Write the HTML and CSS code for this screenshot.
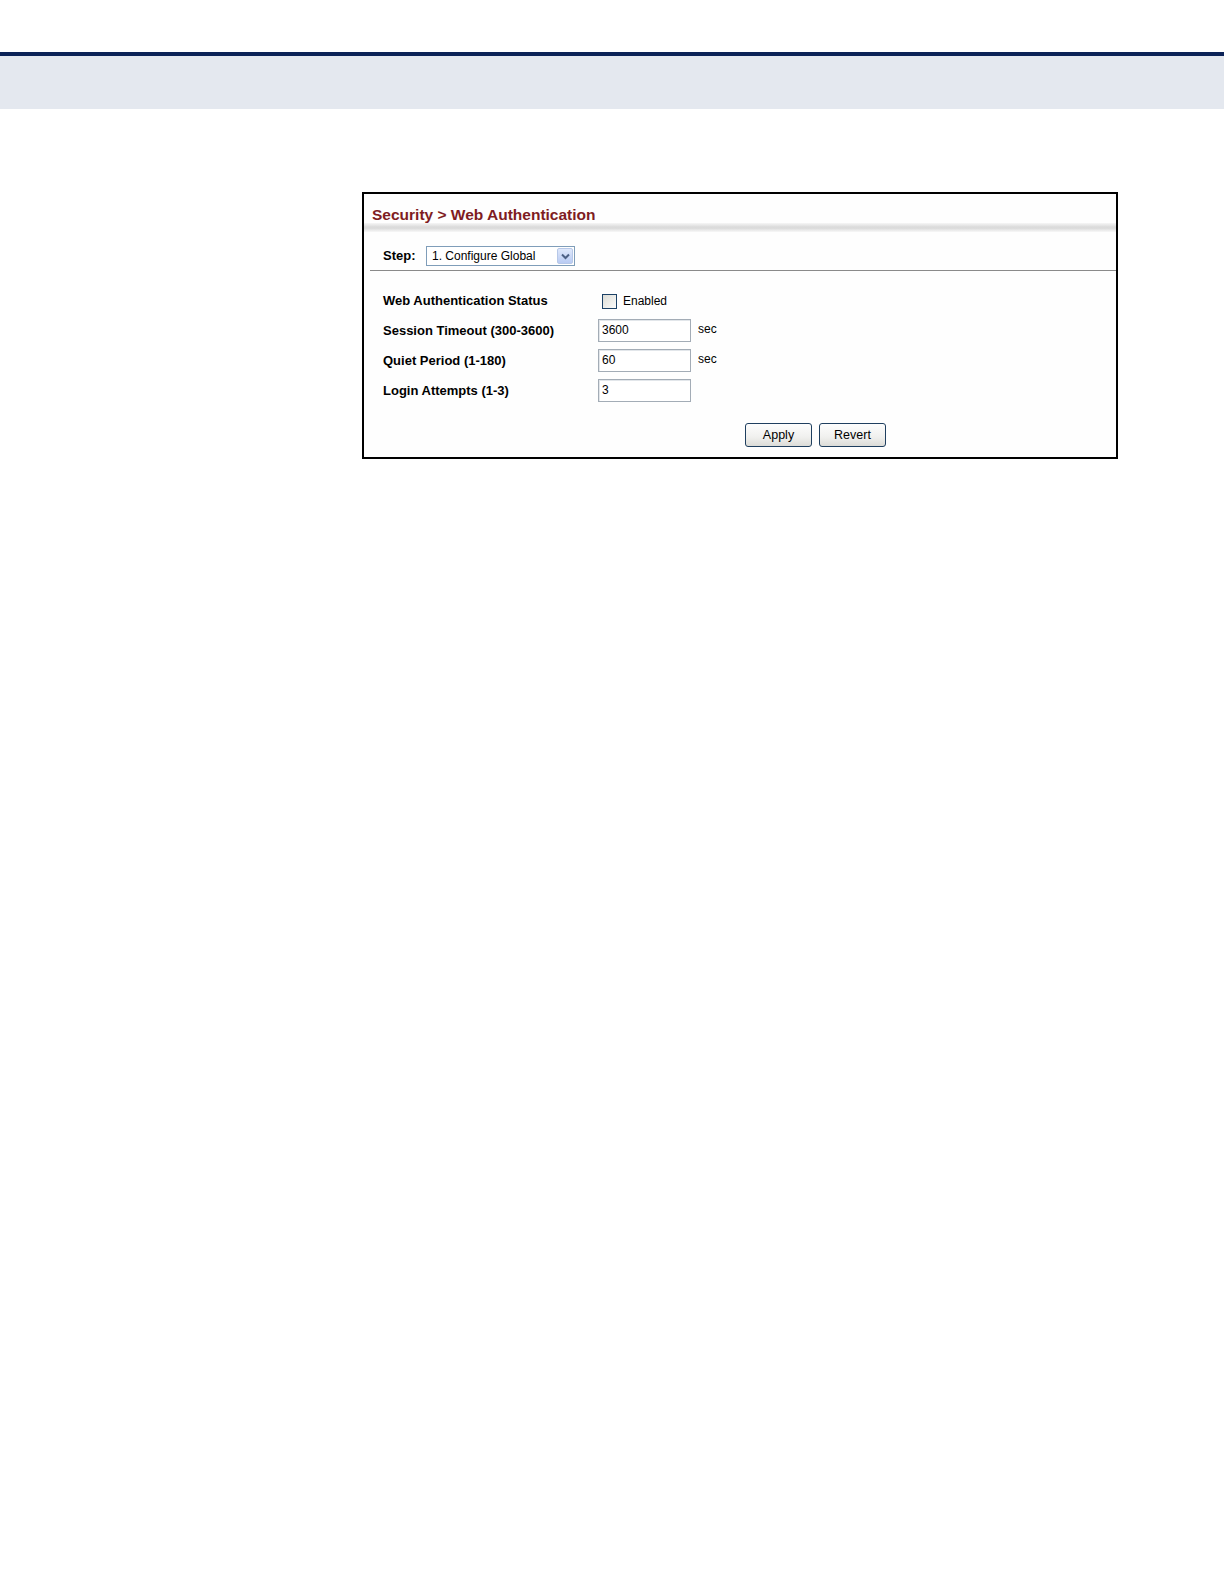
FILE: index.html
```html
<!DOCTYPE html>
<html>
<head>
<meta charset="utf-8">
<link rel="stylesheet" href="styles.css">
</head>
<body>
<div class="top-line"></div>
<div class="top-band"></div>
<div class="panel">
  <div class="title">Security &gt; Web Authentication</div>
  <div class="title-bar"></div>
  <div class="step-row">
    <span class="step-label">Step:</span>
    <div class="select">
      <span class="select-text">1. Configure Global</span>
      <span class="select-btn">
        <svg width="9" height="7" viewBox="0 0 9 7"><path d="M1 1.5 L4.5 5 L8 1.5" fill="none" stroke="#4d6185" stroke-width="2"/></svg>
      </span>
    </div>
  </div>
  <div class="form">
    <div class="label">Web Authentication Status</div>
    <div class="field"><span class="checkbox"></span><span class="cb-text">Enabled</span></div>
    <div class="label">Session Timeout (300-3600)</div>
    <div class="field"><span class="input">3600</span><span class="unit">sec</span></div>
    <div class="label">Quiet Period (1-180)</div>
    <div class="field"><span class="input">60</span><span class="unit">sec</span></div>
    <div class="label">Login Attempts (1-3)</div>
    <div class="field"><span class="input">3</span></div>
  </div>
  <div class="buttons">
    <span class="btn">Apply</span>
    <span class="btn">Revert</span>
  </div>
</div>
</body>
</html>
```
FILE: styles.css
```css
body {
  margin: 0;
  background: #ffffff;
  font-family: "Liberation Sans", Arial, sans-serif;
  color: #000;
}
.top-line {
  margin-top: 52px;
  height: 4px;
  background: #0b2257;
}
.top-band {
  height: 53px;
  background: #e4e8ef;
}
.panel {
  margin: 83px 0 0 362px;
  width: 756px;
  height: 267px;
  box-sizing: border-box;
  border: 2px solid #000;
  background: #fefefe;
}
.title {
  height: 29px;
  box-sizing: border-box;
  padding: 11px 0 0 8px;
  font-size: 15.5px;
  font-weight: bold;
  color: #7f1c22;
  line-height: 19px;
}
.title-bar {
  height: 9px;
  background: linear-gradient(to bottom, #f6f6f6 0%, #dadada 45%, #dcdcdc 60%, #f8f8f8 100%);
}
.step-row {
  display: flex;
  align-items: flex-start;
  height: 39px;
  box-sizing: border-box;
  padding: 14px 0 0 13px;
  margin-left: 6px;
  border-bottom: 1px solid #8a8a8a;
}
.step-label {
  font-size: 13px;
  font-weight: bold;
  width: 43px;
  line-height: 20px;
}
.select {
  display: flex;
  align-items: center;
  width: 149px;
  height: 20px;
  box-sizing: border-box;
  border: 1px solid #7f9db9;
  background: #fff;
  padding: 1px;
}
.select-text {
  flex: 1;
  font-size: 12px;
  padding-left: 4px;
}
.select-btn {
  width: 16px;
  height: 16px;
  box-sizing: border-box;
  border: 1px solid #b7c8e8;
  border-radius: 2px;
  background: linear-gradient(to bottom, #dfe8fb, #b9cbf3);
  display: flex;
  align-items: center;
  justify-content: center;
}
.form {
  display: grid;
  grid-template-columns: 215px auto;
  grid-auto-rows: 23px;
  row-gap: 7px;
  padding: 18px 0 0 19px;
  align-items: center;
}
.label {
  font-size: 13px;
  font-weight: bold;
}
.field {
  display: flex;
  align-items: center;
}
.checkbox {
  width: 13px;
  height: 13px;
  margin: 2px 0 0 4px;
  border: 1px solid #1c4166;
  background: linear-gradient(135deg, #dcdcd6, #fbfbfa);
}
.cb-text {
  font-size: 12px;
  margin-left: 6px;
}
.input {
  width: 93px;
  height: 23px;
  box-sizing: border-box;
  border: 1px solid #a3acb6;
  box-shadow: inset 1px 1px 0 #e2e6ea;
  font-size: 12px;
  line-height: 21px;
  padding-left: 3px;
  background: #fff;
}
.unit {
  font-size: 12px;
  margin-left: 7px;
  margin-top: -3px;
}
.buttons {
  display: flex;
  gap: 7px;
  padding: 21px 0 0 381px;
}
.btn {
  width: 67px;
  height: 24px;
  box-sizing: border-box;
  border: 1px solid #1f3f5f;
  border-radius: 3px;
  background: linear-gradient(to bottom, #fdfdfd 0%, #f0f0ee 60%, #dcdcd8 100%);
  font-size: 12.5px;
  line-height: 22px;
  text-align: center;
}
```
